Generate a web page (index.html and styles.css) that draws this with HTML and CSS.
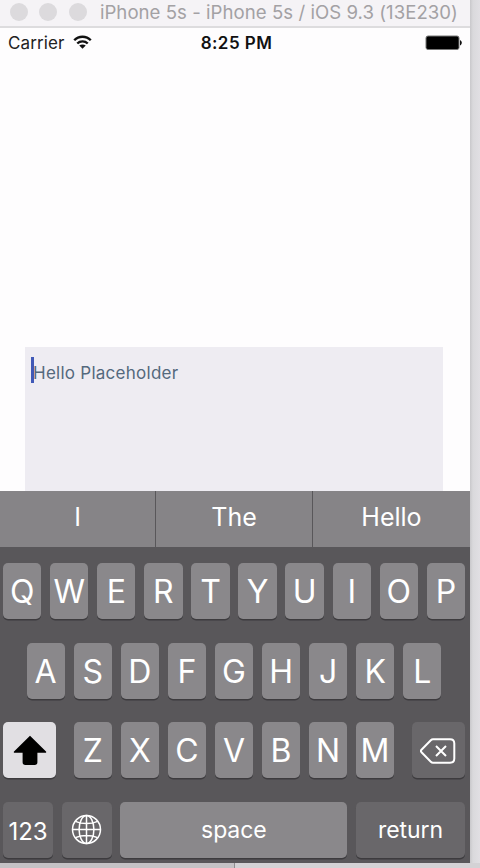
FILE: index.html
```html
<!DOCTYPE html>
<html lang="en">
<head>
<meta charset="utf-8">
<title>iPhone 5s</title>
<link rel="stylesheet" href="styles.css">
</head>
<body>
<main class="window">
  <header class="titlebar">
    <i class="light"></i><i class="light"></i><i class="light"></i>
    <span class="title">iPhone 5s - iPhone 5s / iOS 9.3 (13E230)</span>
  </header>
  <section class="screen">
    <div class="status">
      <div class="carrier"><span>Carrier</span>
        <svg class="wifi" width="19" height="14" viewBox="0 0 20 14" fill="none" stroke="#111" stroke-width="2.5"><path d="M1.3 5.2C6 .3 14 .3 18.7 5.2M4.5 8.6c3-3 8-3 11 0"/><path d="M10 14 6.6 10.8c1.8-1.7 5-1.7 6.8 0z" fill="#111" stroke="none"/></svg>
      </div>
      <span class="time">8:25 PM</span>
      <svg class="battery" width="37" height="16" viewBox="0 0 37 16"><rect x="1" y="1" width="33" height="13.5" rx="2" fill="#000" stroke="#777" stroke-width="1"/><path d="M35 5.2c2.4.6 2.4 4.6 0 5.2z" fill="#111"/></svg>
    </div>
    <div class="textview"><i class="caret"></i><span class="placeholder">Hello Placeholder</span></div>
  </section>
  <section class="keyboard">
    <div class="suggestions"><span>I</span><span>The</span><span>Hello</span></div>
    <div class="rows">
      <div class="row"><b>Q</b><b>W</b><b>E</b><b>R</b><b>T</b><b>Y</b><b>U</b><b>I</b><b>O</b><b>P</b></div>
      <div class="row middle"><b>A</b><b>S</b><b>D</b><b>F</b><b>G</b><b>H</b><b>J</b><b>K</b><b>L</b></div>
      <div class="row lower">
        <b class="shift"><svg width="34" height="31" viewBox="0 0 34 31"><path d="M17 .7 33 16.5q.8 1.3-1 1.3h-7.6v9.4q0 2.8-2.8 2.8h-9.2q-2.8 0-2.8-2.8v-9.4H2q-1.8 0-1-1.3z"/></svg></b>
        <b>Z</b><b>X</b><b>C</b><b>V</b><b>B</b><b>N</b><b>M</b>
        <b class="delete"><svg width="36" height="26" viewBox="0 0 36 26" fill="none" stroke="#fff" stroke-width="2"><path d="M13 1.2h17q4.3 0 4.3 4.3v15q0 4.3-4.3 4.3H13q-1.2 0-2.2-1L1.5 14.3q-1.3-1.3 0-2.6l9.3-9.5q1-1 2.2-1z"/><path d="m16 8 10 10M26 8 16 18"/></svg></b>
      </div>
      <div class="row bottom">
        <b class="dark numbers">123</b>
        <b class="dark globe"><svg width="31" height="31" viewBox="0 0 31 31" fill="none" stroke="#fff" stroke-width="1.5"><circle cx="15.5" cy="15.5" r="14"/><ellipse cx="15.5" cy="15.5" rx="7.4" ry="14"/><path d="M15.5 1.5v28M1.5 15.5h28M4.5 7.3c6 3 16 3 22 0M4.5 23.7c6-3 16-3 22 0"/></svg></b>
        <b class="space">space</b>
        <b class="dark return">return</b>
      </div>
    </div>
  </section>
</main>
<footer class="desktop"></footer>
</body>
</html>
```
FILE: styles.css
```css
* { box-sizing: border-box; }
body {
  margin: 0;
  height: 868px;
  overflow: hidden;
  background: linear-gradient(90deg, #c9c8cb 470px, #dad9dc 473px, #e1dfe3 480px);
  font-family: Inter, "Liberation Sans", sans-serif;
}
.window { width: 470px; height: 863px; display: flex; flex-direction: column; background: #fefdfe; }
.titlebar {
  height: 28px;
  padding: 0 0 3px 10px;
  display: flex;
  align-items: center;
  background: #f5f3f6;
  border-bottom: 2px solid #dddcde;
}
.light { width: 18px; height: 18px; margin-right: 11.3px; border-radius: 50%; background: #dcdadd; }
.title { margin-left: 2px; font-size: 18.6px; letter-spacing: .04px; color: #a3a1a4; white-space: nowrap; }
.screen { height: 463px; display: flex; flex-direction: column; }
.status {
  height: 319px;
  padding: 4px 8px 0;
  display: grid;
  grid-template-columns: 1fr auto 1fr;
  align-items: start;
  font-size: 17px;
  line-height: 22px;
  color: #222;
}
.carrier { display: flex; align-items: center; gap: 9px; letter-spacing: .1px; }
.wifi { margin-top: -2px; }
.time { margin-left: 3px; font-weight: 600; letter-spacing: .45px; color: #111; }
.battery { justify-self: end; margin-top: 3px; }
.textview {
  width: 418px;
  height: 144px;
  margin-left: 25px;
  padding: 10px 6px;
  display: flex;
  align-items: flex-start;
  background: #eeecf2;
}
.caret { width: 3px; height: 26px; background: #4059b7; }
.placeholder { margin-left: -1px; font-size: 17px; letter-spacing: .26px; line-height: 32px; color: #54697d; }
.keyboard { height: 372px; background: #59575a; color: #fff; }
.suggestions {
  height: 56px;
  display: grid;
  grid-template-columns: 155px 157px 158px;
  background: #868487;
  font-size: 25px;
  line-height: 52px;
  text-align: center;
}
.suggestions span + span { border-left: 1px solid #59575a; }
.rows { height: 316px; padding: 16px 5px 0 3px; display: flex; flex-direction: column; gap: 23.5px; }
.row { display: flex; justify-content: space-between; height: 56px; }
.row b {
  width: 38.3px;
  height: 56px;
  padding-top: 1px;
  display: flex;
  align-items: center;
  justify-content: center;
  border-radius: 5px;
  background: #8a888b;
  box-shadow: 0 1.5px 0 #3d3b3e;
  font-size: 32px;
  font-weight: 400;
}
.middle { padding: 0 23.5px; }
.row .shift { width: 53px; margin-right: 9px; background: #e1dfe3; }
.row .delete { width: 53px; margin-left: 9px; background: #69676a; }
.row .dark { background: #69676a; }
.row.bottom b { padding-top: 0; font-size: 23px; letter-spacing: -.1px; }
.row.bottom .numbers { width: 50px; padding-top: 3px; font-size: 24px; }
.row .globe { width: 50px; }
.row .space { width: 227px; }
.row .return { width: 109px; }
.desktop { height: 5px; background: linear-gradient(90deg, #c5c3c6 234px, #8f8d90 234px 235px, #d4d2d5 235px); }
```
